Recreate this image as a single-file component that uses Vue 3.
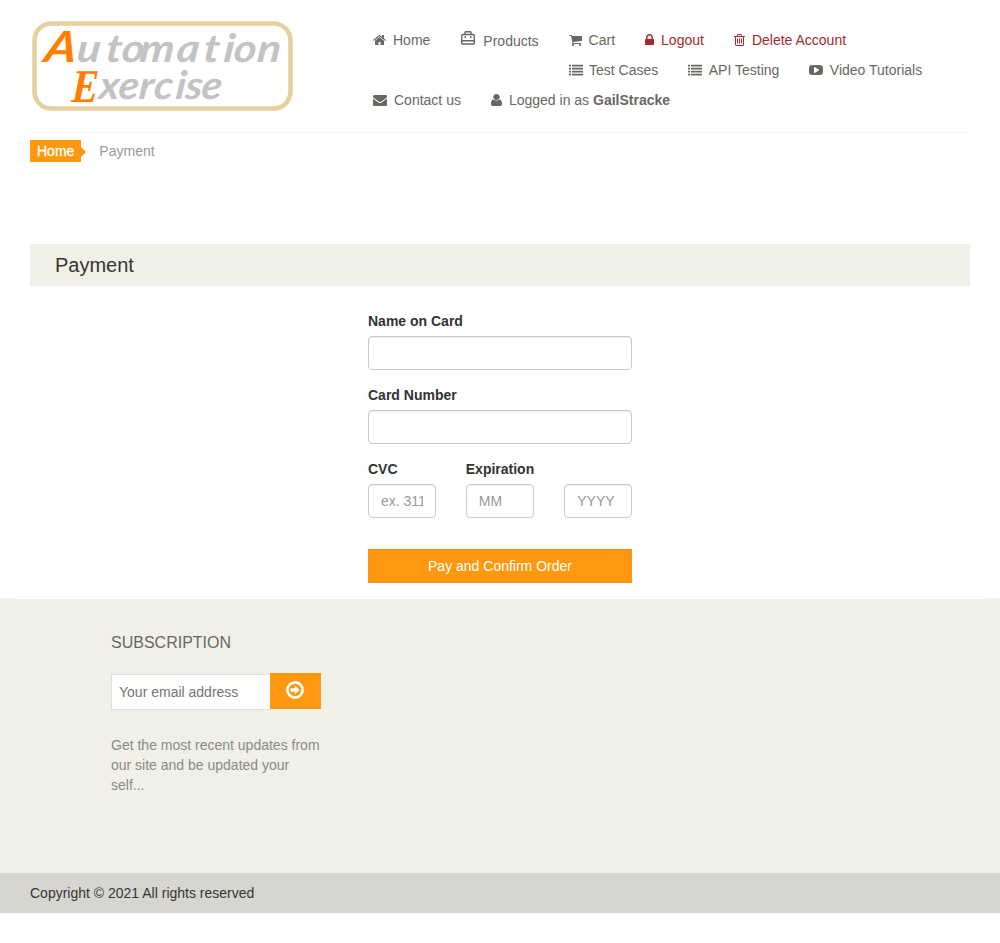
<script setup>
const icons = {
  home: {
    x: 64, w: 1664,
    d: 'M1472 992v480q0 26-19 45t-45 19h-384v-384h-256v384h-384q-26 0-45-19t-19-45v-480q0-1 .5-3t.5-3l575-474 575 474q1 2 1 6zm223-69l-62 74q-8 9-21 11h-3q-13 0-21-7l-692-577-692 577q-12 8-24 7-13-2-21-11l-62-74q-8-10-7-23.5t11-21.5l719-599q32-26 76-26t76 26l244 204v-195q0-14 9-23t23-9h192q14 0 23 9t9 23v408l219 182q10 8 11 21.5t-7 23.5z',
  },
  cart: {
    x: 64, w: 1664,
    d: 'M704 1536q0 52-38 90t-90 38-90-38-38-90 38-90 90-38 90 38 38 90zm896 0q0 52-38 90t-90 38-90-38-38-90 38-90 90-38 90 38 38 90zm128-1088v512q0 24-16.5 42.5t-40.5 21.5l-1044 122q13 60 13 70 0 16-24 64h920q26 0 45 19t19 45-19 45-45 19h-1024q-26 0-45-19t-19-45q0-11 8-31.5t16-36 21.5-40 15.5-29.5l-177-823h-204q-26 0-45-19t-19-45 19-45 45-19h256q16 0 28.5 6.5t19.5 15.5 13 24.5 8 26 5.5 29.5 4.5 26h1201q26 0 45 19t19 45z',
  },
  lock: {
    x: 320, w: 1152,
    d: 'M640 768h512v-192q0-106-75-181t-181-75-181 75-75 181v192zm832 96v576q0 40-28 68t-68 28h-960q-40 0-68-28t-28-68v-576q0-40 28-68t68-28h32v-192q0-184 132-316t316-132 316 132 132 316v192h32q40 0 68 28t28 68z',
  },
  trash: {
    x: 192, w: 1408,
    d: 'M704 736v576q0 14-9 23t-23 9h-64q-14 0-23-9t-9-23v-576q0-14 9-23t23-9h64q14 0 23 9t9 23zm256 0v576q0 14-9 23t-23 9h-64q-14 0-23-9t-9-23v-576q0-14 9-23t23-9h64q14 0 23 9t9 23zm256 0v576q0 14-9 23t-23 9h-64q-14 0-23-9t-9-23v-576q0-14 9-23t23-9h64q14 0 23 9t9 23zm128 724v-948h-896v948q0 22 7 40.5t14.5 27 10.5 8.5h832q3 0 10.5-8.5t14.5-27 7-40.5zm-672-1076h448l-48-117q-7-9-17-11h-317q-10 2-17 11zm928 32v64q0 14-9 23t-23 9h-96v948q0 83-47 143.5t-113 60.5h-832q-66 0-113-58.5t-47-141.5v-952h-96q-14 0-23-9t-9-23v-64q0-14 9-23t23-9h309l70-167q15-37 54-63t79-26h320q40 0 79 26t54 63l70 167h309q14 0 23 9t9 23z',
  },
  list: {
    x: 0, w: 1792,
    d: 'M0 224h256v224H0zM384 224h1408v224H384zM0 608h256v224H0zM384 608h1408v224H384zM0 992h256v224H0zM384 992h1408v224H384zM0 1376h256v224H0zM384 1376h1408v224H384z',
  },
  video: {
    x: 0, w: 1792,
    d: 'M1280 896q0-37-30-54l-512-320q-31-20-65-2-33 18-33 56v640q0 38 33 56 16 8 31 8 20 0 34-10l512-320q30-17 30-54zM1792 896q0 96-1 150t-8.500 136.500-22.500 147.500q-16 73-69 123t-124 58q-222 25-671 25t-671-25q-71-8-124.500-58t-69.500-123q-14-65-21.500-147.500t-8.500-136.500-1-150 1-150 8.500-136.500 22.500-147.500q16-73 69-123t124-58q222-25 671-25t671 25q71 8 124.500 58t69.500 123q14 65 21.500 147.500t8.500 136.500 1 150z',
  },
  mail: {
    x: 0, w: 1792,
    d: 'M1792 710v794q0 66-47 113t-113 47h-1472q-66 0-113-47t-47-113v-794q44 49 101 87 362 246 497 345 57 42 92.500 65.500t94.500 48 110 24.500h2q51 0 110-24.500t94.500-48 92.500-65.500q170-123 498-345 57-39 100-87zm0-294q0 79-49 151t-122 123q-376 261-468 325-10 7-42.500 31t-54 38.500-52 32.500-57.500 27-50 9h-2q-23 0-50-9t-57.500-27-52-32.500-54-38.500-42.500-31q-91-64-262-182.500t-205-142.500q-62-42-117-115.500t-55-136.500q0-78 41.500-130t118.500-52h1472q65 0 112.500 47t47.500 113z',
  },
  user: {
    x: 256, w: 1280, width: 11,
    d: 'M1536 1399q0 109-62.500 187t-150.500 78h-854q-88 0-150.500-78t-62.500-187q0-85 8.500-160.500t31.500-152 58.500-131 94-89 134.500-34.500q131 128 313 128t313-128q76 0 134.500 34.500t94 89 58.500 131 31.500 152 8.500 160.500zm-256-887q0 159-112.500 271.500t-271.500 112.500-271.500-112.500-112.500-271.500 112.500-271.500 271.500-112.500 271.500 112.500 112.500 271.500z',
  },
}

const rows = [
  [
    { icon: 'home', label: 'Home' },
    { icon: 'bag', label: 'Products' },
    { icon: 'cart', label: 'Cart' },
    { icon: 'lock', label: 'Logout', red: true },
    { icon: 'trash', label: 'Delete Account', red: true },
  ],
  [
    { icon: 'list', label: 'Test Cases' },
    { icon: 'list', label: 'API Testing' },
    { icon: 'video', label: 'Video Tutorials' },
  ],
  [
    { icon: 'mail', label: 'Contact us' },
    { icon: 'user', label: 'Logged in as', strong: 'GailStracke' },
  ],
]
</script>

<template>
  <div class="page">
    <header class="header">
      <svg class="logo" width="264" height="92" viewBox="0 0 264 92" role="img">
        <rect x="4.500" y="3.500" width="256" height="85" rx="17" fill="#fff" stroke="#e6d0a0" stroke-width="4.600" />
        <g class="script">
          <text class="cap" transform="translate(13 42) skewX(-10)" textLength="32" lengthAdjust="spacingAndGlyphs">A</text>
          <text transform="translate(46 42) skewX(-6) scale(1.120 1)" x="0 26 40 56 89 113 131 140 161">utomation</text>
          <text class="cap e" transform="translate(41 82) skewX(-3)" textLength="27" lengthAdjust="spacingAndGlyphs">E</text>
          <text transform="translate(68 79) skewX(-6) scale(1.080 1)" x="0 18 37 51 71 80 95">xercise</text>
        </g>
      </svg>
      <nav class="nav">
        <ul v-for="(row, i) in rows" :key="i" :class="['row', 'row-' + i]">
          <li v-for="item in row" :key="item.label" :class="{ red: item.red, products: item.icon === 'bag' }">
            <svg v-if="item.icon === 'bag'" class="bag" width="14" height="14" viewBox="0 0 14 14">
              <path d="M1.500 3.500h11q.8 0 .8.800v7.900q0 .8-.8.800h-11q-.8 0-.8-.8v-7.900q0-.8.800-.8zM.7 9.800h12.600M4 3.500V1.500q0-.8.800-.8h4.400q.8 0 .8.800v2M4.300 5v2.200M9.700 5v2.200" fill="none" stroke="currentColor" stroke-width="1.400" />
            </svg>
            <svg v-else class="fa" :width="icons[item.icon].width || icons[item.icon].w / 128" height="14" preserveAspectRatio="none" :viewBox="`${icons[item.icon].x} 0 ${icons[item.icon].w} 1792`">
              <path :d="icons[item.icon].d" fill="currentColor" fill-rule="evenodd" />
            </svg>
            <span>{{ item.label }}<template v-if="item.strong">&nbsp;<b>{{ item.strong }}</b></template></span>
          </li>
        </ul>
      </nav>
    </header>

    <main class="main">
      <div class="crumbs">
        <a class="crumb-home">Home</a>
        <span>Payment</span>
      </div>
      <h2 class="heading">Payment</h2>
      <form class="form" @submit.prevent>
        <label>Name on Card</label>
        <input class="control" type="text" />
        <label>Card Number</label>
        <input class="control" type="text" />
        <div class="trio">
          <div><label>CVC</label><input class="control" type="text" placeholder="ex. 311" /></div>
          <div><label>Expiration</label><input class="control" type="text" placeholder="MM" /></div>
          <div><label>&nbsp;</label><input class="control" type="text" placeholder="YYYY" /></div>
        </div>
        <button class="pay" type="submit">Pay and Confirm Order</button>
      </form>
    </main>

    <footer>
      <div class="widget">
        <div class="subscribe">
          <h2>Subscription</h2>
          <div class="email">
            <input type="email" placeholder="Your email address" />
            <button type="button">
              <svg width="18" height="18" viewBox="0 0 18 18">
                <circle cx="9" cy="9" r="7.600" fill="none" stroke="#fff" stroke-width="2.700" />
                <path d="M4.500 7.300h4.300V4.400L13.600 9l-4.800 4.600v-2.900H4.500z" fill="#fff" />
              </svg>
            </button>
          </div>
          <p>Get the most recent updates from<br />our site and be updated your<br />self...</p>
        </div>
      </div>
      <div class="copyright">Copyright © 2021 All rights reserved</div>
    </footer>
  </div>
</template>

<style>
body {
  margin: 0;
  background: #fff;
}
</style>

<style scoped>
.page {
  font-family: "Liberation Sans", Arial, sans-serif;
  font-size: 14px;
  line-height: 20px;
  color: #333;
}
.page *,
.page *::before {
  box-sizing: border-box;
}
.header {
  display: flex;
  height: 133px;
  margin: 0 30px;
  padding-top: 20px;
  border-bottom: 1px solid #f5f5f5;
}
.logo {
  flex: none;
  display: block;
}
.script {
  font-family: Lato, sans-serif;
  font-style: italic;
  font-weight: bold;
  font-size: 39px;
  fill: #c3c3c3;
}
.script .cap {
  font-size: 43px;
  fill: #ff8000;
}
.script .e {
  font-family: "Liberation Serif", serif;
  font-size: 47px;
}
.nav {
  margin: 10px 0 0 79px;
}
.row {
  display: flex;
  gap: 30px;
  height: 30px;
  margin: 0;
  padding: 0;
  list-style: none;
  color: #696763;
  white-space: nowrap;
}
.row-1 {
  padding-left: 195.500px;
}
.row li {
  display: flex;
  height: 20px;
}
.fa {
  display: block;
  margin: 3px 7px 0 0;
}
.row-1 .fa {
  margin-right: 6.500px;
}
.red {
  color: #a52a2a;
}
.products span {
  padding-top: 1px;
}
.bag {
  margin: 1px 8px 0 1px;
}
.main {
  margin: 0 30px;
}
.crumbs {
  display: flex;
  gap: 18px;
  height: 111px;
  padding-top: 7px;
  color: #999;
}
.crumbs span {
  padding-top: 1px;
}
.crumb-home {
  position: relative;
  height: 22px;
  padding: 1px 7px;
  background: #fe980f;
  color: #fff;
  -webkit-text-stroke: 0.300px #fff;
}
.crumb-home::before {
  content: "";
  position: absolute;
  left: 100%;
  top: 7px;
  border: solid transparent;
  border-width: 5px 0 5px 5px;
  border-left-color: #fe980f;
}
.heading {
  height: 42px;
  margin: 0;
  padding: 6px 25px;
  background: #f0f0e9;
  color: #363432;
  font-size: 20px;
  font-weight: 400;
  line-height: 30px;
}
.form {
  width: 264px;
  height: 312px;
  margin: 0 auto;
  padding-top: 25px;
}
.form label {
  display: block;
  margin-bottom: 5px;
  font-weight: 700;
}
.control {
  display: block;
  width: 100%;
  height: 34px;
  margin: 0 0 15px;
  padding: 6px 12px;
  border: 1px solid #ccc;
  border-radius: 4px;
  box-shadow: inset 0 1px 1px rgba(0, 0, 0, 0.075);
  font: inherit;
  line-height: 20px;
}
.control::placeholder {
  color: #999;
}
.trio {
  display: grid;
  grid-template-columns: repeat(3, 1fr);
  gap: 30px;
}
.pay {
  display: block;
  width: 100%;
  height: 34px;
  margin-top: 16px;
  padding: 0;
  border: 0;
  background: #fe980f;
  box-shadow: inset 0 1px 1px rgba(0, 0, 0, 0.075);
  color: #fff;
  font: inherit;
}
.widget {
  height: 275px;
  padding: 34px 0 0 111px;
  background: linear-gradient(#fff, #fff) 15px 0 / calc(100% - 30px) 1px no-repeat #f0f0e9;
}
.subscribe h2 {
  margin: 0 0 19px;
  color: #696763;
  font-size: 16px;
  font-weight: 400;
  line-height: 22px;
  text-transform: uppercase;
}
.email {
  display: flex;
  height: 37px;
}
.email input {
  width: 160px;
  height: 36px;
  margin: 1px 0 0;
  padding: 7px;
  border: 1px solid #ddd;
  font: inherit;
}
.email input::placeholder {
  color: #757575;
}
.email button {
  display: flex;
  justify-content: center;
  width: 51px;
  height: 36px;
  margin-left: -1px;
  padding: 8px 1px 0 0;
  border: 0;
  background: #fe980f;
}
.subscribe p {
  margin: 25px 0 0;
  color: #8b8b85;
}
.copyright {
  height: 40px;
  padding: 10px 30px;
  background: #d6d6d0;
  color: #363432;
}
</style>
